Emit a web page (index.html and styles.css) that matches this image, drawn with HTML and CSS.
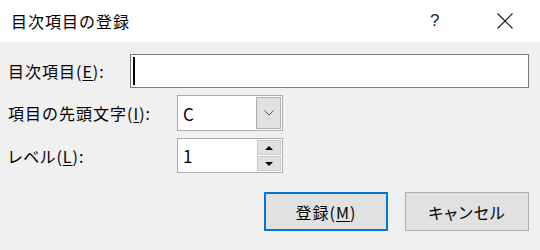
FILE: index.html
```html
<!DOCTYPE html>
<html lang="ja">
<head>
    <meta charset="UTF-8">
    <title>目次項目の登録</title>
    <link rel="stylesheet" href="styles.css">
</head>
<body>
<div class="dialog">
    <!-- Title bar -->
    <div class="titlebar">
        <span class="title">目次項目の登録</span>
        <span class="help">?</span>
        <span class="close">
            <svg width="16" height="16" viewBox="0 0 16 16">
                <path d="M0.5 0.5 L15.5 15.5 M15.5 0.5 L0.5 15.5" stroke="#111" stroke-width="1.1" fill="none"/>
            </svg>
        </span>
    </div>

    <div class="content">
        <div class="row">
            <label class="label label-short">目次項目(<u>E</u>):</label>
            <div class="textbox"><span class="caret"></span></div>
        </div>

        <div class="row">
            <label class="label label-long">項目の先頭文字(<u>I</u>):</label>
            <div class="combo">
                <span class="value">C</span>
                <span class="drop">
                    <svg width="10" height="6" viewBox="0 0 10 6">
                        <path d="M0.5 0.5 L5 5 L9.5 0.5" stroke="#555" stroke-width="1" fill="none"/>
                    </svg>
                </span>
            </div>
        </div>

        <div class="row">
            <label class="label label-long"><span class="kana">レベル</span>(<u>L</u>):</label>
            <div class="spin">
                <span class="value">1</span>
                <span class="spin-buttons">
                    <span class="spin-btn">
                        <svg width="8" height="4" viewBox="0 0 8 4"><path d="M0 4 L4 0 L8 4 Z" fill="#000"/></svg>
                    </span>
                    <span class="spin-btn">
                        <svg width="8" height="4" viewBox="0 0 8 4"><path d="M0 0 L8 0 L4 4 Z" fill="#000"/></svg>
                    </span>
                </span>
            </div>
        </div>

        <div class="buttons">
            <button class="btn btn-default">登録(<u>M</u>)</button>
            <button class="btn"><span class="kana">キャンセル</span></button>
        </div>
    </div>
</div>
</body>
</html>
```

FILE: styles.css
```css
/* General Styles */
body {
    margin: 0;
    padding: 0;
    width: 540px;
    height: 250px;
    overflow: hidden;
    background: #f0f0f0;
    font-family: "Noto Sans CJK JP", "Noto Sans", sans-serif;
    font-size: 16px;
    color: #000;
}
.dialog {
    height: 250px;
}

/* Title bar */
.titlebar {
    height: 42px;
    background: #fff;
    display: flex;
    align-items: center;
}
.title {
    padding-left: 11px;
    flex: 1;
    letter-spacing: 1px;
}
.help {
    width: 20px;
    font-family: "Liberation Sans", sans-serif;
    font-size: 17px;
    color: #222;
    margin-right: 47px;
}
.close {
    display: flex;
    width: 43px;
    justify-content: flex-start;
}

/* Content */
.content {
    padding: 12px 11px 0 8px;
}
.row {
    display: flex;
    align-items: center;
    margin-bottom: 7px;
}
.label {
    letter-spacing: 1px;
    white-space: nowrap;
}
.label u, .btn u {
    text-underline-offset: 2px;
}
.label-short {
    width: 122px;
}
.label-long {
    width: 169px;
}
.kana {
    font-feature-settings: "palt";
    letter-spacing: 1px;
}

.textbox {
    flex: 1;
    height: 32px;
    background: #fff;
    border: 1px solid #7a7a7a;
    display: flex;
    align-items: center;
}
.caret {
    width: 2px;
    height: 28px;
    background: #000;
    margin-left: 2px;
}

.combo, .spin {
    width: 103px;
    background: #fff;
    border: 1px solid #adadad;
    display: flex;
    align-items: stretch;
    padding: 1px 1px 1px 0;
    box-sizing: content-box;
}
.combo {
    height: 32px;
}
.spin {
    height: 31px;
}
.value {
    flex: 1;
    padding-left: 5px;
    display: flex;
    align-items: center;
    font-size: 17px;
}
.drop {
    width: 23px;
    background: #e1e1e1;
    border: 1px solid #adadad;
    display: flex;
    align-items: center;
    justify-content: center;
}
.spin-buttons {
    width: 24px;
    display: flex;
    flex-direction: column;
    gap: 1px;
}
.spin-btn {
    flex: 1;
    background: #e1e1e1;
    border: 1px solid #cccccc;
    display: flex;
    align-items: center;
    justify-content: center;
}

/* Buttons */
.buttons {
    display: flex;
    justify-content: flex-end;
    gap: 17px;
    margin-top: 19px;
}
.btn {
    width: 124px;
    height: 39px;
    background: #e1e1e1;
    border: 1px solid #adadad;
    font-family: inherit;
    font-size: 16px;
    color: #000;
    padding: 0;
    letter-spacing: 1px;
}
.btn-default {
    border: 2px solid #0078d7;
}
```
